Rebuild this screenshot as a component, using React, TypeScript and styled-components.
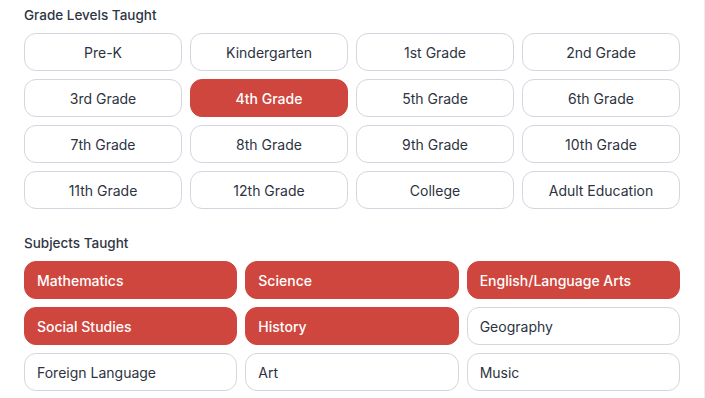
import React, { useState } from 'react';
import styled, { createGlobalStyle } from 'styled-components';

const GRADES = [
  'Pre-K', 'Kindergarten', '1st Grade', '2nd Grade',
  '3rd Grade', '4th Grade', '5th Grade', '6th Grade',
  '7th Grade', '8th Grade', '9th Grade', '10th Grade',
  '11th Grade', '12th Grade', 'College', 'Adult Education',
];

const SUBJECTS = [
  'Mathematics', 'Science', 'English/Language Arts',
  'Social Studies', 'History', 'Geography',
  'Foreign Language', 'Art', 'Music',
];

const App = () => {
  const [grades, setGrades] = useState<string[]>(['4th Grade']);
  const [subjects, setSubjects] = useState<string[]>([
    'Mathematics', 'Science', 'English/Language Arts', 'Social Studies', 'History',
  ]);

  const toggle = (list: string[], set: (v: string[]) => void, item: string) =>
    set(list.includes(item) ? list.filter((i) => i !== item) : [...list, item]);

  return (
    <Page>
      <GlobalStyle />
      <Section>
        <Label>Grade Levels Taught</Label>
        <Grid $cols={4}>
          {GRADES.map((g) => (
            <Chip
              key={g}
              $active={grades.includes(g)}
              $align="center"
              onClick={() => toggle(grades, setGrades, g)}
            >
              {g}
            </Chip>
          ))}
        </Grid>
      </Section>
      <Section>
        <Label>Subjects Taught</Label>
        <Grid $cols={3}>
          {SUBJECTS.map((s) => (
            <Chip
              key={s}
              $active={subjects.includes(s)}
              $align="left"
              onClick={() => toggle(subjects, setSubjects, s)}
            >
              {s}
            </Chip>
          ))}
        </Grid>
      </Section>
    </Page>
  );
};

export default App;

const GlobalStyle = createGlobalStyle`
  body {
    margin: 0;
    background: #fff;
    font-family: Inter, "Noto Sans", sans-serif;
  }
`;

const Page = styled.div({
  width: '656px',
  height: '398px',
  borderRight: '1px solid #ececef',
  padding: '6px 24px 0 24px',
  boxSizing: 'content-box',
  display: 'flex',
  flexDirection: 'column',
  gap: '25px',
  overflow: 'hidden',
});

const Section = styled.div({
  display: 'flex',
  flexDirection: 'column',
  gap: '9px',
});

const Label = styled.div({
  fontSize: '13.5px',
  fontWeight: 500,
  color: '#2f3544',
  lineHeight: '18px',
});

const Grid = styled.div<{ $cols: number }>`
  display: grid;
  grid-template-columns: repeat(${(p) => p.$cols}, 1fr);
  gap: 8px;
`;

const Chip = styled.button<{ $active: boolean; $align: 'center' | 'left' }>`
  height: 38px;
  box-sizing: border-box;
  border-radius: 12px;
  border: 1px solid ${(p) => (p.$active ? '#cf463e' : '#d3d6de')};
  background: ${(p) => (p.$active ? '#cf463e' : '#fff')};
  color: ${(p) => (p.$active ? '#fff' : '#2d3341')};
  font-family: Inter, "Noto Sans", sans-serif;
  font-size: 14px;
  font-weight: ${(p) => (p.$active ? 500 : 400)};
  text-align: ${(p) => p.$align};
  padding: 0 12px;
  cursor: pointer;
`;
